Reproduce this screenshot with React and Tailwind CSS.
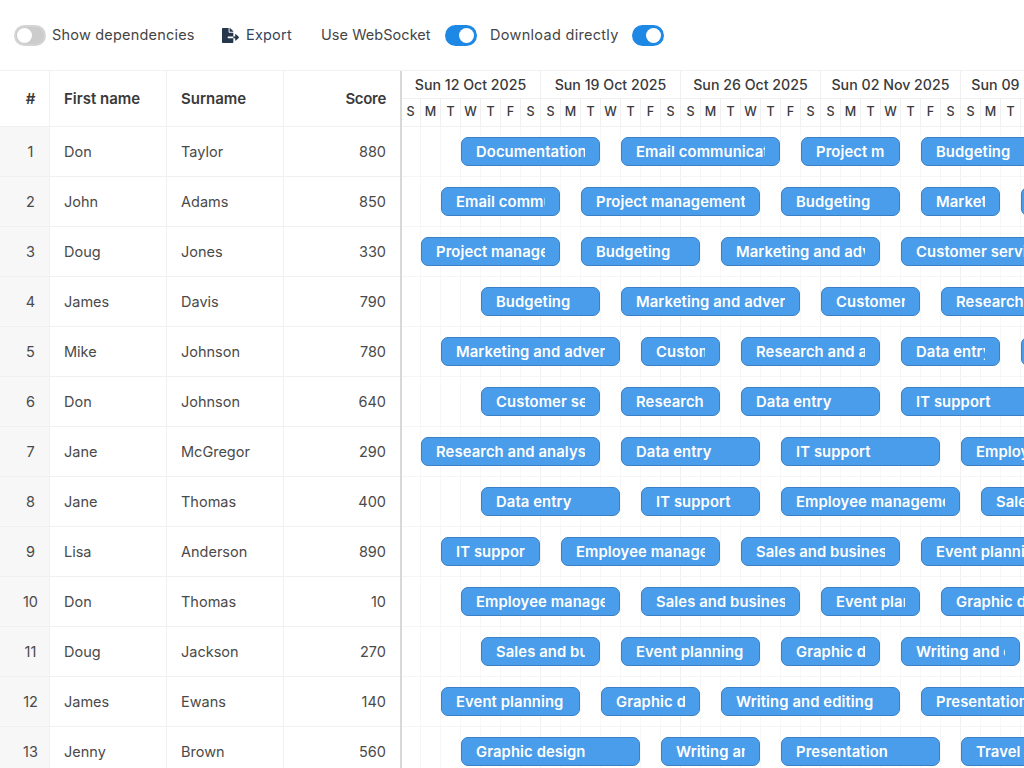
import React from "react";
import { FaFileExport } from "react-icons/fa";

const people = [
  ["Don", "Taylor", 880],
  ["John", "Adams", 850],
  ["Doug", "Jones", 330],
  ["James", "Davis", 790],
  ["Mike", "Johnson", 780],
  ["Don", "Johnson", 640],
  ["Jane", "McGregor", 290],
  ["Jane", "Thomas", 400],
  ["Lisa", "Anderson", 890],
  ["Don", "Thomas", 10],
  ["Doug", "Jackson", 270],
  ["James", "Ewans", 140],
  ["Jenny", "Brown", 560],
];

const skills = [
  "Documentation",
  "Email communication",
  "Project management",
  "Budgeting",
  "Marketing and advertising",
  "Customer service",
  "Research and analysis",
  "Data entry",
  "IT support",
  "Employee management",
  "Sales and business development",
  "Event planning",
  "Graphic design",
  "Writing and editing",
  "Presentation",
  "Travel arrangements",
];

// start / end in pixels from the left edge of the timeline
const bars = [
  [[60, 199], [220, 379], [400, 499], [520, 659]],
  [[40, 159], [180, 359], [380, 499], [520, 599], [620, 739]],
  [[20, 159], [180, 299], [320, 479], [500, 659]],
  [[80, 199], [220, 399], [420, 519], [540, 679]],
  [[40, 219], [240, 319], [340, 479], [500, 599], [620, 739]],
  [[80, 199], [220, 319], [340, 479], [500, 639]],
  [[20, 199], [220, 359], [380, 539], [560, 719]],
  [[80, 219], [240, 359], [380, 559], [580, 699]],
  [[40, 139], [160, 319], [340, 499], [520, 679]],
  [[60, 219], [240, 399], [420, 519], [540, 679]],
  [[80, 199], [220, 359], [380, 479], [500, 619]],
  [[40, 179], [200, 299], [320, 499], [520, 659]],
  [[60, 239], [260, 359], [380, 539], [560, 699]],
];

const weeks = ["Sun 12 Oct 2025", "Sun 19 Oct 2025", "Sun 26 Oct 2025", "Sun 02 Nov 2025", "Sun 09 Nov 2025"];
const dayLetters = ["S", "M", "T", "W", "T", "F", "S"];
const allDays = Array.from({ length: 35 }, (_, i) => i);

function Toggle({ on }) {
  return (
    <span className={`flex h-[21px] w-8 items-center rounded-full border-2 p-px ${on ? "justify-end border-[#1e88e5] bg-[#1e88e5]" : "justify-start border-[#d4d4d4] bg-[#cccccc]"}`}>
      <span className="h-[15px] w-[15px] rounded-full bg-white" />
    </span>
  );
}

function BodyCell({ className, children }) {
  return <div className={`flex h-full items-center border-r border-[#f0f0f0] ${className}`}>{children}</div>;
}

export default function App() {
  return (
    <div className="h-[768px] w-[1024px] overflow-hidden bg-white font-['Inter',sans-serif] text-[14.5px] text-[#4a4a4a]">
      <div className="flex h-[71px] items-center border-b border-[#f0f0f0] pl-[14px] tracking-[0.2px]">
        <Toggle />
        <span className="ml-[6px] w-[143px] whitespace-nowrap text-[#454545]">Show dependencies</span>
        <FaFileExport className="ml-[27px] text-[17px] text-[#26364d]" />
        <span className="ml-[7px] w-[47px] text-[#33475f]">Export</span>
        <span className="ml-[28px] w-[110px] whitespace-nowrap tracking-[0.05px] text-[#454545]">Use WebSocket</span>
        <span className="ml-[14px]"><Toggle on /></span>
        <span className="ml-[13px] w-[129px] whitespace-nowrap tracking-[0.3px] text-[#454545]">Download directly</span>
        <span className="ml-[13px]"><Toggle on /></span>
      </div>

      <div className="flex">
        <div className="w-[400px] shrink-0">
          <div className="flex h-14 items-center border-b border-[#f0f0f0] text-[15px] font-semibold text-[#3a3a3a]">
            <BodyCell className="w-[50px] justify-center pt-[2px] pl-[12px]">#</BodyCell>
            <BodyCell className="w-[117px] pt-[2px] pl-[14px]">First name</BodyCell>
            <BodyCell className="w-[117px] pt-[2px] pl-[14px]">Surname</BodyCell>
            <div className="w-[116px] pt-[2px] pr-[14px] text-right tracking-[-0.3px]">Score</div>
          </div>
          {people.map((p, i) => (
            <div key={i} className="flex h-[50px] items-center border-b border-[#f0f0f0]">
              <BodyCell className="w-[50px] justify-center bg-[#f7f7f7] pl-[12px]">{i + 1}</BodyCell>
              <BodyCell className="w-[117px] pl-[14px]">{p[0]}</BodyCell>
              <BodyCell className="w-[117px] pl-[14px]">{p[1]}</BodyCell>
              <div className="w-[116px] pr-[14px] text-right">{p[2]}</div>
            </div>
          ))}
        </div>

        <div className="w-[2px] shrink-0 bg-[#d8d8d8]" />

        <div className="min-w-0 flex-1 overflow-hidden">
          <div className="-ml-px w-[1400px]">
            <div className="flex h-7 border-b border-[#f0f0f0]">
              {weeks.map((w) => (
                <div key={w} className="flex w-[140px] shrink-0 items-center justify-center border-r border-[#f0f0f0] text-[14.2px] font-medium whitespace-nowrap text-[#3a3a3a]">
                  {w}
                </div>
              ))}
            </div>
            <div className="flex h-7 border-b border-[#f0f0f0]">
              {allDays.map((d) => (
                <div key={d} className="flex w-5 shrink-0 items-center justify-center border-r border-[#f0f0f0] text-[12.5px] font-medium text-[#3a3a3a]">
                  {dayLetters[d % 7]}
                </div>
              ))}
            </div>
            {bars.map((row, r) => (
              <div key={r} className="relative flex h-[50px] border-b border-[#f5f5f5]">
                {allDays.map((d) => (
                  <div key={d} className={`w-5 shrink-0 border-r ${d % 7 === 6 ? "border-[#f0f0f0]" : "border-[#f7f7f7]"}`} />
                ))}
                {row.map(([start, end], j) => (
                  <div
                    key={j}
                    className="absolute top-[10px] h-[29px] overflow-hidden rounded-[7px] border border-[#3b7fc4] bg-[#4a9dea] px-[14px] text-[14.8px] leading-[28px] font-semibold tracking-[0.1px] text-white"
                    style={{ left: start, width: end - start }}
                  >
                    <div className="overflow-hidden whitespace-nowrap">{skills[(r + j) % skills.length]}</div>
                  </div>
                ))}
              </div>
            ))}
          </div>
        </div>
      </div>
    </div>
  );
}
